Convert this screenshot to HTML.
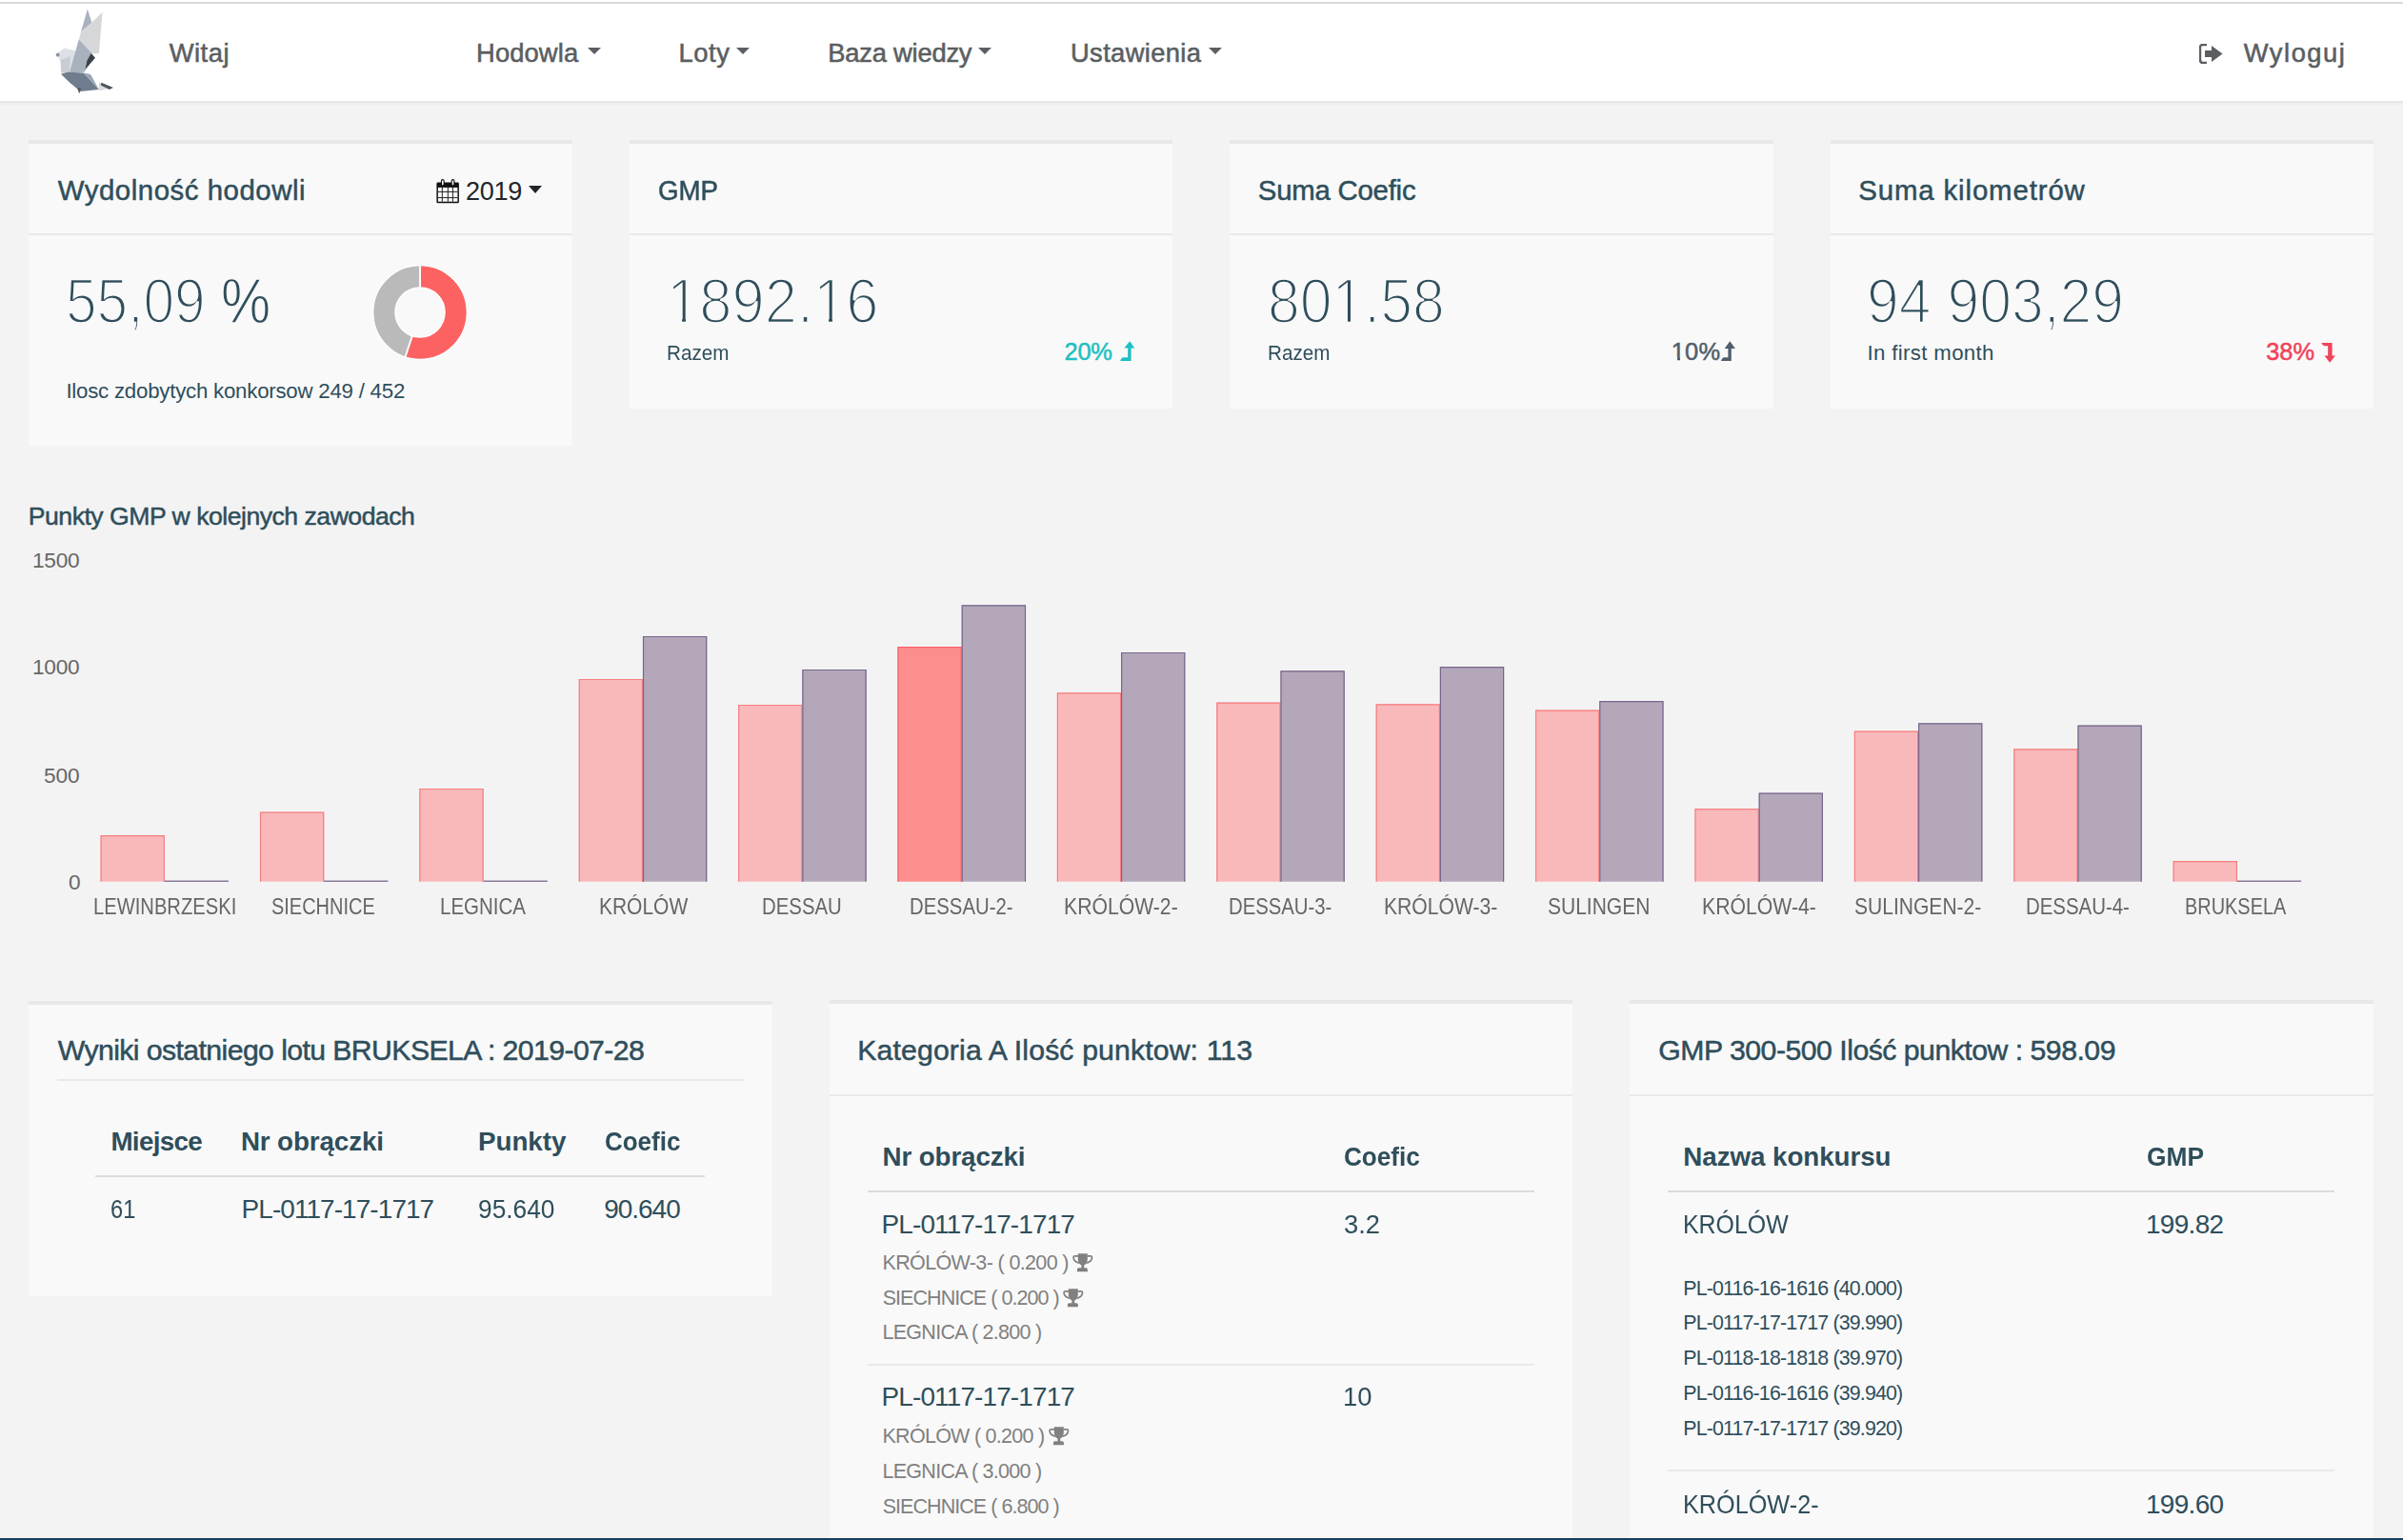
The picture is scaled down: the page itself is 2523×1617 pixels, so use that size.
<!DOCTYPE html>
<html><head><meta charset="utf-8"><title>Dashboard</title>
<style>
html,body{margin:0;padding:0;}
body{width:2523px;height:1617px;overflow:hidden;position:relative;background:#f3f3f3;font-family:"Liberation Sans",sans-serif;}
.t{position:absolute;white-space:pre;line-height:0;}
.abs{position:absolute;}
.nav{position:absolute;left:0;top:0;width:2523px;height:106px;background:#fff;}
.navtop{position:absolute;left:0;top:2px;width:2523px;height:2px;background:#d9d9db;}
.navbot{position:absolute;left:0;top:106px;width:2523px;height:2px;background:#e6e6e6;}
.navbot2{position:absolute;left:0;top:108px;width:2523px;height:2px;background:#eeeeee;}
.card{position:absolute;background:#f9f9f9;border-top:4px solid #e8e8e8;box-sizing:border-box;}
.hl{position:absolute;height:2px;background:#e9e9e9;}
.tl{position:absolute;height:2px;background:#dcdcdc;}
.caret{position:absolute;width:0;height:0;border-left:7.7px solid transparent;border-right:7.7px solid transparent;border-top:7.7px solid #5b5f63;}

</style></head><body>
<div class="nav"></div>
<div class="navtop"></div>
<div class="navbot"></div>
<div class="navbot2"></div>
<!-- logo -->
<svg class="abs" style="left:50px;top:5px" width="80" height="100" viewBox="0 0 80 100">
  <defs><filter id="bl" x="-10%" y="-10%" width="120%" height="120%"><feGaussianBlur stdDeviation="0.7"/></filter></defs>
  <g filter="url(#bl)">
  <polygon points="41.9,4.5 46.4,18.8 35.0,28.6" fill="#a9b3c0"/>
  <polygon points="57.5,7.8 53.9,51.3 46.8,51.3 32.8,36.4 35.0,28.6 46.4,18.8" fill="#d6d7d9"/>
  <polygon points="9.1,52 17.5,45.5 29.5,48.5 22.8,71.4 14.3,71.4 13,58.4" fill="#dde0e4"/>
  <polygon points="14,58 24,54 22.8,71.4 14.3,71.4" fill="#c8cdd4"/>
  <polygon points="32.8,36.4 46.8,51.3 49.4,55.2 38.3,70.8 22.8,71.4 28.3,51.9" fill="#a8b1bc"/>
  <polygon points="45.5,51.3 50,55.8 39.6,67.5 41.5,58.4" fill="#3b4047"/>
  <polygon points="8.5,51.5 12,50.5 12.5,54 9.5,54.5" fill="#8a9099"/>
  <polygon points="14,72.7 21.4,70.8 37.7,71.4 53.9,89 34.4,90.9 22.7,81.2" fill="#6f7d8f"/>
  <polygon points="37.7,71.4 45,73 53.9,89" fill="#9aa5b3"/>
  <polygon points="53.9,81.2 69.5,87 53.9,90.3" fill="#d9dbdd"/>
  <polygon points="56.5,81.8 68.8,87 64.9,89 55.8,84.4" fill="#505459"/>
  <polygon points="31.2,87 35.1,87.7 33.1,93.5" fill="#50555c"/>
  </g>
</svg>
<div class="caret" style="left:616.9px;top:50px"></div>
<div class="caret" style="left:772.6px;top:50px"></div>
<div class="caret" style="left:1027.4px;top:50px"></div>
<div class="caret" style="left:1269.4px;top:50px"></div>
<!-- logout icon -->
<svg class="abs" style="left:2309px;top:46px" width="26" height="21" viewBox="0 0 26 21">
  <path d="M8,1 H4 Q1,1 1,4 V17 Q1,20 4,20 H8" fill="none" stroke="#5b5f63" stroke-width="2.4"/>
  <path d="M6,7 H13 V2 L24.5,10.5 L13,19 V14 H6 Z" fill="#5b5f63"/>
</svg>

<!-- top cards -->
<div class="card" style="left:30px;top:147px;width:571px;height:321px"></div>
<div class="hl" style="left:30px;top:245px;width:571px"></div>
<div class="card" style="left:661px;top:147px;width:570px;height:282px"></div>
<div class="hl" style="left:661px;top:245px;width:570px"></div>
<div class="card" style="left:1291px;top:147px;width:571px;height:282px"></div>
<div class="hl" style="left:1291px;top:245px;width:571px"></div>
<div class="card" style="left:1922px;top:147px;width:570px;height:282px"></div>
<div class="hl" style="left:1922px;top:245px;width:570px"></div>

<!-- calendar icon -->
<svg class="abs" style="left:458px;top:188px" width="25" height="26" viewBox="0 0 25 26">
  <rect x="0.4" y="3.6" width="23.5" height="21.6" rx="1.3" fill="#111"/>
  <rect x="1.9" y="8.9" width="20.5" height="14.8" fill="#f9f9f9"/>
  <g fill="#222">
    <rect x="1.9" y="12.9" width="20.5" height="1"/><rect x="1.9" y="19.1" width="20.5" height="1"/>
    <rect x="5.8" y="8.9" width="1" height="14.8"/><rect x="11.8" y="8.9" width="1" height="14.8"/><rect x="16.9" y="8.9" width="1" height="14.8"/>
  </g>
  <rect x="4.9" y="0" width="3.8" height="8.2" rx="1.9" fill="#111"/>
  <rect x="15.6" y="0" width="3.8" height="8.2" rx="1.9" fill="#111"/>
  <rect x="6.0" y="1.2" width="1.6" height="5.2" rx="0.8" fill="#f9f9f9"/>
  <rect x="16.7" y="1.2" width="1.6" height="5.2" rx="0.8" fill="#f9f9f9"/>
</svg>
<div class="caret" style="left:555px;top:195px;border-left-width:7.8px;border-right-width:7.8px;border-top-width:8px;border-top-color:#212529"></div>

<!-- donut -->
<svg class="abs" style="left:391px;top:278px" width="100" height="100" viewBox="-50 -50 100 100">
  <circle r="37.6" fill="none" stroke="#bababa" stroke-width="22.8"/>
  <circle r="37.6" fill="none" stroke="#fd6262" stroke-width="22.8" stroke-dasharray="130.1 1000" transform="rotate(-90)"/>
  <line x1="0" y1="-50" x2="0" y2="-25" stroke="#f9f9f9" stroke-width="2"/>
  <line x1="0" y1="-25" x2="0" y2="-50" stroke="#f9f9f9" stroke-width="2" transform="rotate(198.3)"/>
  <circle r="49.3" fill="none" stroke="#ffffff" stroke-width="1.3"/>
  <circle r="26.1" fill="none" stroke="#ffffff" stroke-width="1.2"/>
</svg>

<!-- arrows -->
<svg class="abs" style="left:1175px;top:357px" width="18" height="23" viewBox="0 0 18 23">
  <path d="M1.2,21.9 Q2.5,18.2 4.5,18.2 H9.2 V8.6 H5.3 L11.2,1.3 L16.3,8.6 H12.6 V21.9 Z" fill="#1fbfc3"/>
</svg>
<svg class="abs" style="left:1806px;top:357px" width="18" height="23" viewBox="0 0 18 23">
  <path d="M1.0,21.9 Q2.3,18.2 4.3,18.2 H8.4 V8.9 H4.6 L10.3,1.3 L15.9,8.9 H11.8 V21.9 Z" fill="#505f6e"/>
</svg>
<svg class="abs" style="left:2436px;top:358px" width="18" height="24" viewBox="0 0 18 24">
  <path d="M1.3,2.1 Q2.6,5.3 4.6,5.3 H8.2 V15.6 H4.5 L10.2,22.7 L16,15.6 H12.6 V2.1 Z" fill="#f0435a"/>
</svg>
<!-- chart -->
<svg class="abs" style="left:0;top:560px" width="2523" height="380" viewBox="0 560 2523 380" id="chart">
<rect x="105.6" y="877.2" width="67.2" height="48.5" fill="#f9b9bb"/>
<path d="M106.1,925.7 V877.7 H172.3 V925.7" fill="none" stroke="#f67d80" stroke-width="1.2"/>
<rect x="172.8" y="924.5" width="67.2" height="1.5" fill="#8a7a9c"/>
<rect x="273.0" y="852.7" width="67.2" height="73.0" fill="#f9b9bb"/>
<path d="M273.5,925.7 V853.2 H339.7 V925.7" fill="none" stroke="#f67d80" stroke-width="1.2"/>
<rect x="340.2" y="924.5" width="67.2" height="1.5" fill="#8a7a9c"/>
<rect x="440.4" y="828" width="67.2" height="97.7" fill="#f9b9bb"/>
<path d="M440.9,925.7 V828.5 H507.1 V925.7" fill="none" stroke="#f67d80" stroke-width="1.2"/>
<rect x="507.6" y="924.5" width="67.2" height="1.5" fill="#8a7a9c"/>
<rect x="607.8" y="713" width="67.2" height="212.7" fill="#f9b9bb"/>
<path d="M608.3,925.7 V713.5 H674.5 V925.7" fill="none" stroke="#f67d80" stroke-width="1.2"/>
<rect x="675.0" y="668" width="67.2" height="257.7" fill="#b4a7ba"/>
<path d="M675.5,925.7 V668.5 H741.7 V925.7" fill="none" stroke="#75668a" stroke-width="1.2"/>
<rect x="775.2" y="740" width="67.2" height="185.7" fill="#f9b9bb"/>
<path d="M775.7,925.7 V740.5 H841.9 V925.7" fill="none" stroke="#f67d80" stroke-width="1.2"/>
<rect x="842.4" y="703" width="67.2" height="222.7" fill="#b4a7ba"/>
<path d="M842.9,925.7 V703.5 H909.1 V925.7" fill="none" stroke="#75668a" stroke-width="1.2"/>
<rect x="942.5" y="679.2" width="67.2" height="246.5" fill="#fd8e8e"/>
<path d="M943.0,925.7 V679.7 H1009.2 V925.7" fill="none" stroke="#fe5f6a" stroke-width="1.2"/>
<rect x="1009.8" y="635.4" width="67.2" height="290.3" fill="#b4a7ba"/>
<path d="M1010.2,925.7 V635.9 H1076.5 V925.7" fill="none" stroke="#75668a" stroke-width="1.2"/>
<rect x="1109.9" y="727.3" width="67.2" height="198.4" fill="#f9b9bb"/>
<path d="M1110.4,925.7 V727.8 H1176.6 V925.7" fill="none" stroke="#f67d80" stroke-width="1.2"/>
<rect x="1177.1" y="685" width="67.2" height="240.7" fill="#b4a7ba"/>
<path d="M1177.6,925.7 V685.5 H1243.8 V925.7" fill="none" stroke="#75668a" stroke-width="1.2"/>
<rect x="1277.3" y="737.6" width="67.2" height="188.1" fill="#f9b9bb"/>
<path d="M1277.8,925.7 V738.1 H1344.0 V925.7" fill="none" stroke="#f67d80" stroke-width="1.2"/>
<rect x="1344.5" y="704.3" width="67.2" height="221.4" fill="#b4a7ba"/>
<path d="M1345.0,925.7 V704.8 H1411.2 V925.7" fill="none" stroke="#75668a" stroke-width="1.2"/>
<rect x="1444.7" y="739.4" width="67.2" height="186.3" fill="#f9b9bb"/>
<path d="M1445.2,925.7 V739.9 H1511.4 V925.7" fill="none" stroke="#f67d80" stroke-width="1.2"/>
<rect x="1511.9" y="700.1" width="67.2" height="225.6" fill="#b4a7ba"/>
<path d="M1512.4,925.7 V700.6 H1578.6 V925.7" fill="none" stroke="#75668a" stroke-width="1.2"/>
<rect x="1612.1" y="745.6" width="67.2" height="180.1" fill="#f9b9bb"/>
<path d="M1612.6,925.7 V746.1 H1678.8 V925.7" fill="none" stroke="#f67d80" stroke-width="1.2"/>
<rect x="1679.3" y="736.2" width="67.2" height="189.5" fill="#b4a7ba"/>
<path d="M1679.8,925.7 V736.7 H1746.0 V925.7" fill="none" stroke="#75668a" stroke-width="1.2"/>
<rect x="1779.5" y="849.2" width="67.2" height="76.5" fill="#f9b9bb"/>
<path d="M1780.0,925.7 V849.7 H1846.2 V925.7" fill="none" stroke="#f67d80" stroke-width="1.2"/>
<rect x="1846.7" y="832.7" width="67.2" height="93.0" fill="#b4a7ba"/>
<path d="M1847.2,925.7 V833.2 H1913.4 V925.7" fill="none" stroke="#75668a" stroke-width="1.2"/>
<rect x="1946.9" y="767.6" width="67.2" height="158.1" fill="#f9b9bb"/>
<path d="M1947.4,925.7 V768.1 H2013.6 V925.7" fill="none" stroke="#f67d80" stroke-width="1.2"/>
<rect x="2014.1" y="759.3" width="67.2" height="166.4" fill="#b4a7ba"/>
<path d="M2014.6,925.7 V759.8 H2080.8 V925.7" fill="none" stroke="#75668a" stroke-width="1.2"/>
<rect x="2114.3" y="786.4" width="67.2" height="139.3" fill="#f9b9bb"/>
<path d="M2114.8,925.7 V786.9 H2181.0 V925.7" fill="none" stroke="#f67d80" stroke-width="1.2"/>
<rect x="2181.5" y="761.7" width="67.2" height="164.0" fill="#b4a7ba"/>
<path d="M2182.0,925.7 V762.2 H2248.2 V925.7" fill="none" stroke="#75668a" stroke-width="1.2"/>
<rect x="2281.7" y="904.2" width="67.2" height="21.5" fill="#f9b9bb"/>
<path d="M2282.2,925.7 V904.7 H2348.4 V925.7" fill="none" stroke="#f67d80" stroke-width="1.2"/>
<rect x="2348.9" y="924.5" width="67.2" height="1.5" fill="#8a7a9c"/>
</svg>

<!-- bottom cards -->
<div class="card" style="left:30px;top:1051px;width:781px;height:310px"></div>
<div class="hl" style="left:60px;top:1133px;width:721px"></div>
<div class="tl" style="left:100px;top:1234px;width:640px"></div>

<div class="card" style="left:871px;top:1050px;width:780px;height:600px"></div>
<div class="hl" style="left:871px;top:1149px;width:780px"></div>
<div class="tl" style="left:911px;top:1250px;width:700px"></div>
<div class="hl" style="left:911px;top:1432px;width:700px"></div>

<div class="card" style="left:1711px;top:1050px;width:781px;height:600px"></div>
<div class="hl" style="left:1711px;top:1149px;width:781px"></div>
<div class="tl" style="left:1751px;top:1250px;width:700px"></div>
<div class="hl" style="left:1751px;top:1543px;width:700px"></div>

<!-- trophies -->
<svg class="abs" style="left:1126px;top:1316px" width="22" height="20" viewBox="0 0 22 20"><path d="M5.8,0.3 H15.8 V6 Q15.8,11 12.2,12.5 V15.2 H14.3 Q15.9,15.4 15.9,17 V19.2 H4.9 V17 Q4.9,15.4 6.5,15.2 H9.4 V12.5 Q5.8,11 5.8,6 Z" fill="#808080"/><path d="M6,2.8 H2.6 Q1,2.8 1.1,4.8 Q1.6,8.6 6.8,10.2 M15.6,2.8 H19 Q20.6,2.8 20.5,4.8 Q20,8.6 14.8,10.2" fill="none" stroke="#808080" stroke-width="1.7"/></svg>
<svg class="abs" style="left:1116px;top:1353px" width="22" height="20" viewBox="0 0 22 20"><path d="M5.8,0.3 H15.8 V6 Q15.8,11 12.2,12.5 V15.2 H14.3 Q15.9,15.4 15.9,17 V19.2 H4.9 V17 Q4.9,15.4 6.5,15.2 H9.4 V12.5 Q5.8,11 5.8,6 Z" fill="#808080"/><path d="M6,2.8 H2.6 Q1,2.8 1.1,4.8 Q1.6,8.6 6.8,10.2 M15.6,2.8 H19 Q20.6,2.8 20.5,4.8 Q20,8.6 14.8,10.2" fill="none" stroke="#808080" stroke-width="1.7"/></svg>
<svg class="abs" style="left:1101px;top:1498px" width="22" height="20" viewBox="0 0 22 20"><path d="M5.8,0.3 H15.8 V6 Q15.8,11 12.2,12.5 V15.2 H14.3 Q15.9,15.4 15.9,17 V19.2 H4.9 V17 Q4.9,15.4 6.5,15.2 H9.4 V12.5 Q5.8,11 5.8,6 Z" fill="#808080"/><path d="M6,2.8 H2.6 Q1,2.8 1.1,4.8 Q1.6,8.6 6.8,10.2 M15.6,2.8 H19 Q20.6,2.8 20.5,4.8 Q20,8.6 14.8,10.2" fill="none" stroke="#808080" stroke-width="1.7"/></svg>
<div class="abs" style="left:0;top:1615px;width:2523px;height:2px;background:#173f5f"></div>

<div class="t" id="t0" style="left:177.70px;top:55.53px;font-size:27.33px;color:#5a5e62;letter-spacing:0.51px;-webkit-text-stroke:0.55px #5a5e62;">Witaj</div>
<div class="t" id="t1" style="left:500.10px;top:55.53px;font-size:27.33px;color:#5a5e62;letter-spacing:0.11px;-webkit-text-stroke:0.55px #5a5e62;">Hodowla</div>
<div class="t" id="t2" style="left:712.50px;top:55.53px;font-size:27.33px;color:#5a5e62;letter-spacing:0.57px;-webkit-text-stroke:0.55px #5a5e62;">Loty</div>
<div class="t" id="t3" style="left:869.30px;top:55.53px;font-size:27.33px;color:#5a5e62;letter-spacing:-0.22px;-webkit-text-stroke:0.55px #5a5e62;">Baza wiedzy</div>
<div class="t" id="t4" style="left:1124.00px;top:55.53px;font-size:27.33px;color:#5a5e62;letter-spacing:0.37px;-webkit-text-stroke:0.55px #5a5e62;">Ustawienia</div>
<div class="t" id="t5" style="left:2355.80px;top:55.53px;font-size:27.33px;color:#5a5e62;letter-spacing:1.52px;-webkit-text-stroke:0.55px #5a5e62;">Wyloguj</div>
<div class="t" id="t6" style="left:60.70px;top:200.32px;font-size:29.36px;color:#2f4e5b;letter-spacing:0.55px;-webkit-text-stroke:0.5px #2f4e5b;">Wydolność hodowli</div>
<div class="t" id="t7" style="left:690.56px;top:200.32px;font-size:29.36px;color:#2f4e5b;transform:scaleX(0.9420);-webkit-text-stroke:0.5px #2f4e5b;transform-origin:0 0;">GMP</div>
<div class="t" id="t8" style="left:1320.80px;top:200.32px;font-size:29.36px;color:#2f4e5b;letter-spacing:-0.23px;-webkit-text-stroke:0.5px #2f4e5b;">Suma Coefic</div>
<div class="t" id="t9" style="left:1951.20px;top:200.32px;font-size:29.36px;color:#2f4e5b;letter-spacing:0.89px;-webkit-text-stroke:0.5px #2f4e5b;">Suma kilometrów</div>
<div class="t" id="t10" style="left:489.00px;top:200.63px;font-size:27.04px;color:#212529;letter-spacing:-0.27px;">2019</div>
<div class="t" id="t11" style="left:69.42px;top:316.32px;font-size:65.99px;color:#2f4e5b;transform:scaleX(0.8885);-webkit-text-stroke:2.5px #f9f9f9;transform-origin:0 0;">55,09 <span style="-webkit-text-stroke-width:1.3px">%</span></div>
<div class="t" id="t12" style="left:700.34px;top:316.32px;font-size:65.99px;color:#2f4e5b;transform:scaleX(0.9329);-webkit-text-stroke:2.5px #f9f9f9;transform-origin:0 0;">1892.16</div>
<div class="t" id="t13" style="left:1330.76px;top:316.32px;font-size:65.99px;color:#2f4e5b;transform:scaleX(0.9205);-webkit-text-stroke:2.5px #f9f9f9;transform-origin:0 0;">801.58</div>
<div class="t" id="t14" style="left:1960.44px;top:316.32px;font-size:65.99px;color:#2f4e5b;transform:scaleX(0.9200);-webkit-text-stroke:2.5px #f9f9f9;transform-origin:0 0;">94 903,29</div>
<div class="t" id="t15" style="left:69.40px;top:410.59px;font-size:22.24px;color:#2f4e5b;letter-spacing:-0.22px;">Ilosc zdobytych konkorsow 249 / 452</div>
<div class="t" id="t16" style="left:700.07px;top:371.19px;font-size:22.24px;color:#2f4e5b;transform:scaleX(0.9291);transform-origin:0 0;">Razem</div>
<div class="t" id="t17" style="left:1330.57px;top:371.19px;font-size:22.24px;color:#2f4e5b;transform:scaleX(0.9291);transform-origin:0 0;">Razem</div>
<div class="t" id="t18" style="left:1960.40px;top:371.19px;font-size:22.24px;color:#2f4e5b;letter-spacing:0.35px;">In first month</div>
<div class="t" id="t19" style="left:1117.60px;top:369.48px;font-size:25.44px;color:#1fbfc3;letter-spacing:-0.30px;-webkit-text-stroke:0.5px #1fbfc3;">20%</div>
<div class="t" id="t20" style="left:1754.70px;top:369.48px;font-size:25.44px;color:#505f6e;letter-spacing:0.20px;-webkit-text-stroke:0.5px #505f6e;">10%</div>
<div class="t" id="t21" style="left:2379.20px;top:369.48px;font-size:25.44px;color:#f0435a;letter-spacing:-0.05px;-webkit-text-stroke:0.5px #f0435a;">38%</div>
<div class="t" id="t22" style="left:29.80px;top:542.38px;font-size:26.6px;color:#2f4e5b;letter-spacing:-0.49px;-webkit-text-stroke:0.5px #2f4e5b;">Punkty GMP w kolejnych zawodach</div>
<div class="t" id="t23" style="left:34.00px;top:588.14px;font-size:22.67px;color:#666666;letter-spacing:-0.23px;">1500</div>
<div class="t" id="t24" style="left:34.00px;top:699.84px;font-size:22.67px;color:#666666;letter-spacing:-0.23px;">1000</div>
<div class="t" id="t25" style="left:46.00px;top:814.14px;font-size:22.67px;color:#666666;letter-spacing:-0.05px;">500</div>
<div class="t" id="t26" style="left:71.90px;top:925.74px;font-size:22.67px;color:#666666;">0</div>
<div class="t" id="t27" style="left:97.53px;top:951.54px;font-size:23.26px;color:#666666;transform:scaleX(0.8680);transform-origin:0 0;">LEWINBRZESKI</div>
<div class="t" id="t28" style="left:285.24px;top:951.54px;font-size:23.26px;color:#666666;transform:scaleX(0.8586);transform-origin:0 0;">SIECHNICE</div>
<div class="t" id="t29" style="left:461.92px;top:951.54px;font-size:23.26px;color:#666666;transform:scaleX(0.8807);transform-origin:0 0;">LEGNICA</div>
<div class="t" id="t30" style="left:628.70px;top:951.54px;font-size:23.26px;color:#666666;transform:scaleX(0.9017);transform-origin:0 0;">KRÓLÓW</div>
<div class="t" id="t31" style="left:799.92px;top:951.54px;font-size:23.26px;color:#666666;transform:scaleX(0.8764);transform-origin:0 0;">DESSAU</div>
<div class="t" id="t32" style="left:955.12px;top:951.54px;font-size:23.26px;color:#666666;transform:scaleX(0.8752);transform-origin:0 0;">DESSAU-2-</div>
<div class="t" id="t33" style="left:1117.09px;top:951.54px;font-size:23.26px;color:#666666;transform:scaleX(0.9115);transform-origin:0 0;">KRÓLÓW-2-</div>
<div class="t" id="t34" style="left:1289.53px;top:951.54px;font-size:23.26px;color:#666666;transform:scaleX(0.8736);transform-origin:0 0;">DESSAU-3-</div>
<div class="t" id="t35" style="left:1453.09px;top:951.54px;font-size:23.26px;color:#666666;transform:scaleX(0.9092);transform-origin:0 0;">KRÓLÓW-3-</div>
<div class="t" id="t36" style="left:1625.20px;top:951.54px;font-size:23.26px;color:#666666;transform:scaleX(0.9031);transform-origin:0 0;">SULINGEN</div>
<div class="t" id="t37" style="left:1786.69px;top:951.54px;font-size:23.26px;color:#666666;transform:scaleX(0.9130);transform-origin:0 0;">KRÓLÓW-4-</div>
<div class="t" id="t38" style="left:1946.79px;top:951.54px;font-size:23.26px;color:#666666;transform:scaleX(0.9052);transform-origin:0 0;">SULINGEN-2-</div>
<div class="t" id="t39" style="left:2127.02px;top:951.54px;font-size:23.26px;color:#666666;transform:scaleX(0.8777);transform-origin:0 0;">DESSAU-4-</div>
<div class="t" id="t40" style="left:2294.34px;top:951.54px;font-size:23.26px;color:#666666;transform:scaleX(0.8568);transform-origin:0 0;">BRUKSELA</div>
<div class="t" id="t41" style="left:60.80px;top:1103.12px;font-size:30.23px;color:#2f4e5b;letter-spacing:-0.59px;-webkit-text-stroke:0.5px #2f4e5b;">Wyniki ostatniego lotu BRUKSELA : 2019-07-28</div>
<div class="t" id="t42" style="left:900.30px;top:1103.12px;font-size:30.23px;color:#2f4e5b;letter-spacing:0.13px;-webkit-text-stroke:0.5px #2f4e5b;">Kategoria A Ilość punktow: 113</div>
<div class="t" id="t43" style="left:1741.30px;top:1103.12px;font-size:30.23px;color:#2f4e5b;letter-spacing:-0.50px;-webkit-text-stroke:0.5px #2f4e5b;">GMP 300-500 Ilość punktow : 598.09</div>
<div class="t" id="t44" style="left:116.40px;top:1199.38px;font-size:27.76px;font-weight:700;color:#2f4e5b;letter-spacing:-0.66px;">Miejsce</div>
<div class="t" id="t45" style="left:252.90px;top:1199.38px;font-size:27.76px;font-weight:700;color:#2f4e5b;letter-spacing:-0.11px;">Nr obrączki</div>
<div class="t" id="t46" style="left:501.90px;top:1199.38px;font-size:27.76px;font-weight:700;color:#2f4e5b;letter-spacing:0.02px;">Punkty</div>
<div class="t" id="t47" style="left:634.56px;top:1199.38px;font-size:27.76px;font-weight:700;color:#2f4e5b;transform:scaleX(0.9356);transform-origin:0 0;">Coefic</div>
<div class="t" id="t48" style="left:926.50px;top:1215.08px;font-size:27.76px;font-weight:700;color:#2f4e5b;letter-spacing:-0.11px;">Nr obrączki</div>
<div class="t" id="t49" style="left:1411.06px;top:1215.08px;font-size:27.76px;font-weight:700;color:#2f4e5b;transform:scaleX(0.9416);transform-origin:0 0;">Coefic</div>
<div class="t" id="t50" style="left:1767.30px;top:1215.08px;font-size:27.76px;font-weight:700;color:#2f4e5b;letter-spacing:-0.06px;">Nazwa konkursu</div>
<div class="t" id="t51" style="left:2254.05px;top:1215.08px;font-size:27.76px;font-weight:700;color:#2f4e5b;transform:scaleX(0.9483);transform-origin:0 0;">GMP</div>
<div class="t" id="t52" style="left:116.15px;top:1270.12px;font-size:27.91px;color:#2f4e5b;transform:scaleX(0.8474);transform-origin:0 0;">61</div>
<div class="t" id="t53" style="left:253.60px;top:1270.12px;font-size:27.91px;color:#2f4e5b;letter-spacing:-0.90px;">PL-0117-17-1717</div>
<div class="t" id="t54" style="left:502.06px;top:1270.12px;font-size:27.91px;color:#2f4e5b;transform:scaleX(0.9424);transform-origin:0 0;">95.640</div>
<div class="t" id="t55" style="left:634.20px;top:1270.12px;font-size:27.91px;color:#2f4e5b;letter-spacing:-0.97px;">90.640</div>
<div class="t" id="t56" style="left:925.50px;top:1286.32px;font-size:27.91px;color:#2f4e5b;letter-spacing:-0.84px;">PL-0117-17-1717</div>
<div class="t" id="t57" style="left:1411.02px;top:1286.32px;font-size:27.91px;color:#2f4e5b;transform:scaleX(0.9799);transform-origin:0 0;">3.2</div>
<div class="t" id="t58" style="left:925.50px;top:1466.92px;font-size:27.91px;color:#2f4e5b;letter-spacing:-0.84px;">PL-0117-17-1717</div>
<div class="t" id="t59" style="left:1410.03px;top:1466.92px;font-size:27.91px;color:#2f4e5b;transform:scaleX(0.9825);transform-origin:0 0;">10</div>
<div class="t" id="t60" style="left:1766.71px;top:1286.32px;font-size:27.91px;color:#2f4e5b;transform:scaleX(0.8925);transform-origin:0 0;">KRÓLÓW</div>
<div class="t" id="t61" style="left:2253.00px;top:1286.32px;font-size:27.91px;color:#2f4e5b;letter-spacing:-0.65px;">199.82</div>
<div class="t" id="t62" style="left:1766.69px;top:1580.12px;font-size:27.91px;color:#2f4e5b;transform:scaleX(0.9045);transform-origin:0 0;">KRÓLÓW-2-</div>
<div class="t" id="t63" style="left:2253.00px;top:1580.12px;font-size:27.91px;color:#2f4e5b;letter-spacing:-0.65px;">199.60</div>
<div class="t" id="t64" style="left:926.50px;top:1325.74px;font-size:21.51px;color:#808080;letter-spacing:-0.64px;">KRÓLÓW-3- ( 0.200 )</div>
<div class="t" id="t65" style="left:926.70px;top:1362.54px;font-size:21.51px;color:#808080;letter-spacing:-0.95px;">SIECHNICE ( 0.200 )</div>
<div class="t" id="t66" style="left:926.50px;top:1399.34px;font-size:21.51px;color:#808080;letter-spacing:-0.72px;">LEGNICA ( 2.800 )</div>
<div class="t" id="t67" style="left:926.50px;top:1507.54px;font-size:21.51px;color:#808080;letter-spacing:-0.73px;">KRÓLÓW ( 0.200 )</div>
<div class="t" id="t68" style="left:926.50px;top:1544.54px;font-size:21.51px;color:#808080;letter-spacing:-0.72px;">LEGNICA ( 3.000 )</div>
<div class="t" id="t69" style="left:926.70px;top:1581.54px;font-size:21.51px;color:#808080;letter-spacing:-0.95px;">SIECHNICE ( 6.800 )</div>
<div class="t" id="t70" style="left:1767.30px;top:1352.89px;font-size:21.37px;color:#2f4e5b;letter-spacing:-0.84px;">PL-0116-16-1616 (40.000)</div>
<div class="t" id="t71" style="left:1767.30px;top:1389.29px;font-size:21.37px;color:#2f4e5b;letter-spacing:-0.84px;">PL-0117-17-1717 (39.990)</div>
<div class="t" id="t72" style="left:1767.30px;top:1426.19px;font-size:21.37px;color:#2f4e5b;letter-spacing:-0.84px;">PL-0118-18-1818 (39.970)</div>
<div class="t" id="t73" style="left:1767.30px;top:1463.39px;font-size:21.37px;color:#2f4e5b;letter-spacing:-0.84px;">PL-0116-16-1616 (39.940)</div>
<div class="t" id="t74" style="left:1767.30px;top:1500.19px;font-size:21.37px;color:#2f4e5b;letter-spacing:-0.84px;">PL-0117-17-1717 (39.920)</div>
<div class="abs" style="left:705px;top:334px;width:11px;height:5px;background:#f9f9f9"></div>
<div class="abs" style="left:720px;top:334px;width:11px;height:5px;background:#f9f9f9"></div>
<div class="abs" style="left:859px;top:334px;width:11px;height:5px;background:#f9f9f9"></div>
<div class="abs" style="left:874px;top:334px;width:11px;height:5px;background:#f9f9f9"></div>
<div class="abs" style="left:1403px;top:334px;width:12px;height:5px;background:#f9f9f9"></div>
<div class="abs" style="left:1418px;top:334px;width:11px;height:5px;background:#f9f9f9"></div>
<div class="abs" style="left:1755px;top:375px;width:6px;height:4px;background:#f9f9f9"></div>
<div class="abs" style="left:1764px;top:375px;width:5px;height:4px;background:#f9f9f9"></div>
</body></html>
